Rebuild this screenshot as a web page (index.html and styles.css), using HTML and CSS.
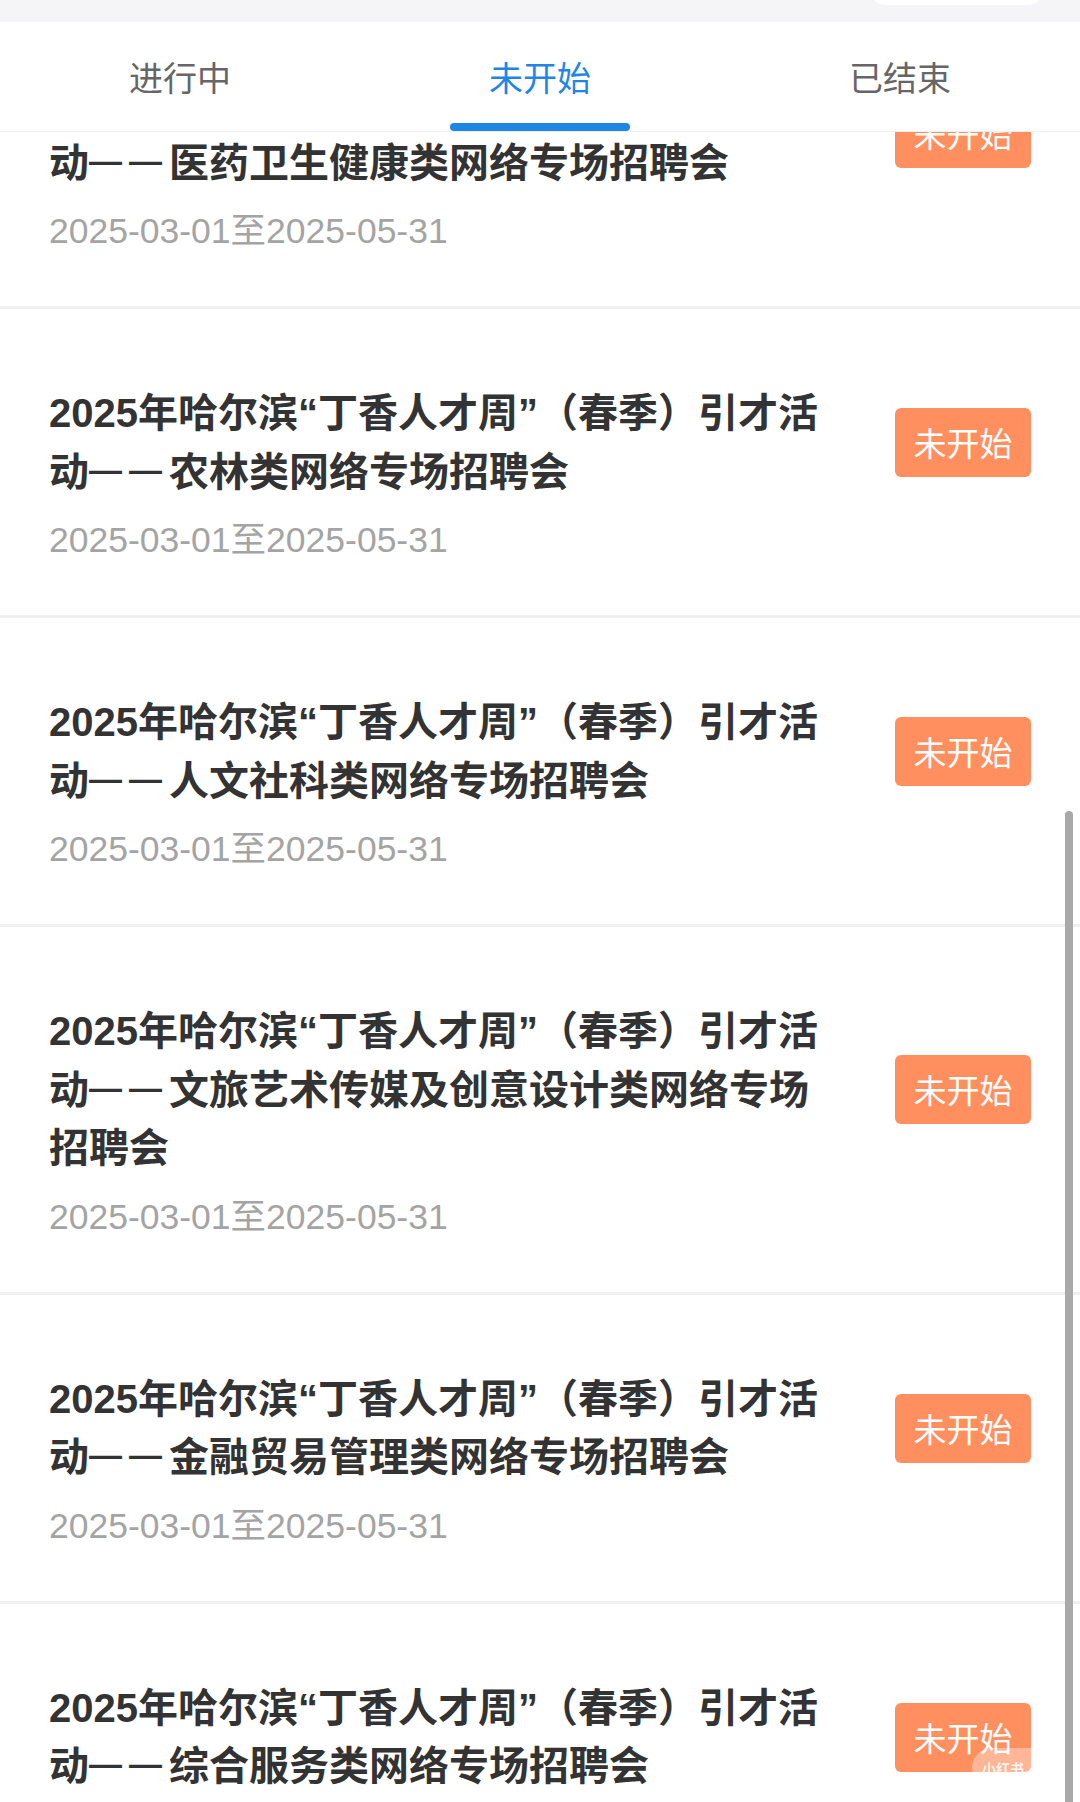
FILE: index.html
```html
<!DOCTYPE html>
<html lang="zh-CN">
<head>
    <meta charset="UTF-8">
    <meta name="viewport" content="width=device-width, initial-scale=1.0">
    <title>引才活动</title>
    <link rel="stylesheet" href="styles.css">
</head>
<body>

    <!-- Top bar with status tabs -->
    <header class="top">
        <div class="strip"><span class="strip-pill"></span></div>
        <nav class="tabs">
            <a href="#" class="tab">进行中</a>
            <a href="#" class="tab active">未开始</a>
            <a href="#" class="tab">已结束</a>
        </nav>
    </header>

    <!-- Activity list -->
    <ul class="job-list">
        <li class="job">
            <div class="job-main">
                <h3 class="job-title">2025年哈尔滨“丁香人才周”（春季）引才活动<span class="dash">——</span>医药卫生健康类网络专场招聘会</h3>
                <span class="badge">未开始</span>
            </div>
            <p class="job-date">2025-03-01至2025-05-31</p>
        </li>
        <li class="job">
            <div class="job-main">
                <h3 class="job-title">2025年哈尔滨“丁香人才周”（春季）引才活动<span class="dash">——</span>农林类网络专场招聘会</h3>
                <span class="badge">未开始</span>
            </div>
            <p class="job-date">2025-03-01至2025-05-31</p>
        </li>
        <li class="job">
            <div class="job-main">
                <h3 class="job-title">2025年哈尔滨“丁香人才周”（春季）引才活动<span class="dash">——</span>人文社科类网络专场招聘会</h3>
                <span class="badge">未开始</span>
            </div>
            <p class="job-date">2025-03-01至2025-05-31</p>
        </li>
        <li class="job">
            <div class="job-main">
                <h3 class="job-title">2025年哈尔滨“丁香人才周”（春季）引才活动<span class="dash">——</span>文旅艺术传媒及创意设计类网络专场招聘会</h3>
                <span class="badge">未开始</span>
            </div>
            <p class="job-date">2025-03-01至2025-05-31</p>
        </li>
        <li class="job">
            <div class="job-main">
                <h3 class="job-title">2025年哈尔滨“丁香人才周”（春季）引才活动<span class="dash">——</span>金融贸易管理类网络专场招聘会</h3>
                <span class="badge">未开始</span>
            </div>
            <p class="job-date">2025-03-01至2025-05-31</p>
        </li>
        <li class="job">
            <div class="job-main">
                <h3 class="job-title">2025年哈尔滨“丁香人才周”（春季）引才活动<span class="dash">——</span>综合服务类网络专场招聘会</h3>
                <span class="badge">未开始</span>
            </div>
            <p class="job-date">2025-03-01至2025-05-31</p>
        </li>
    </ul>

    <div class="scroll-thumb"></div>
    <div class="watermark">小红书</div>

</body>
</html>
```

FILE: styles.css
```css
* {
    box-sizing: border-box;
    margin: 0;
    padding: 0;
}

body {
    font-family: "Liberation Sans", "Noto Sans CJK SC", sans-serif;
    background-color: #fff;
    color: #333;
    overflow: hidden;
    text-spacing-trim: space-all;
}

/* Header */
.top {
    position: fixed;
    top: 0;
    left: 0;
    right: 0;
    z-index: 10;
    background-color: #fff;
}

.strip {
    height: 22px;
    background-color: #f5f5f8;
    overflow: hidden;
}

.strip-pill {
    display: block;
    width: 173px;
    height: 30px;
    margin: -25px 0 0 870px;
    background-color: #fff;
    border-radius: 15px;
}

.tabs {
    display: grid;
    grid-template-columns: repeat(3, 1fr);
    height: 110px;
    border-bottom: 1px solid #efefef;
}

.tab {
    position: relative;
    display: flex;
    align-items: center;
    justify-content: center;
    font-family: "Noto Sans CJK SC", sans-serif;
    font-size: 34px;
    color: #666;
    text-decoration: none;
}

.tab.active {
    color: #1f86e5;
}

.tab.active::after {
    content: "";
    position: absolute;
    left: 90px;
    right: 90px;
    bottom: 0;
    height: 8px;
    border-radius: 4px;
    background-color: #1f86e5;
}

/* List */
.job-list {
    list-style: none;
}

.job {
    padding: 75px 49px 51px;
    border-bottom: 3px solid #f0f0f0;
}

.job-main {
    display: flex;
    align-items: center;
    gap: 66px;
}

.job-title {
    flex: 1;
    font-size: 40px;
    line-height: 58.5px;
    font-weight: 700;
    color: #333;
}

/* two short bars with a gap between them */
.dash {
    font-size: 33px;
    line-height: 0;
    letter-spacing: 7px;
    vertical-align: 5px;
}

.badge {
    flex: none;
    width: 136px;
    height: 69px;
    line-height: 69px;
    text-align: center;
    font-family: "Noto Sans CJK SC", sans-serif;
    font-size: 33px;
    color: #fff;
    background-color: #ff8f5e;
    border-radius: 6px;
}

.job-date {
    margin-top: 15px;
    font-size: 35.5px;
    line-height: 48px;
    color: #a4a4a4;
}

/* Overlays */
.scroll-thumb {
    position: fixed;
    left: 1065px;
    top: 811px;
    width: 8px;
    height: 1000px;
    border-radius: 4px;
    background-color: #a9a9a9;
}

.watermark {
    position: fixed;
    left: 972px;
    top: 1748px;
    width: 64px;
    height: 40px;
    padding-left: 10px;
    line-height: 40px;
    font-family: "Noto Sans CJK SC", sans-serif;
    font-size: 14px;
    font-weight: 700;
    color: rgba(255, 255, 255, 0.85);
    background-color: rgba(255, 255, 255, 0.35);
    border-radius: 20px 0 0 20px;
}
```
